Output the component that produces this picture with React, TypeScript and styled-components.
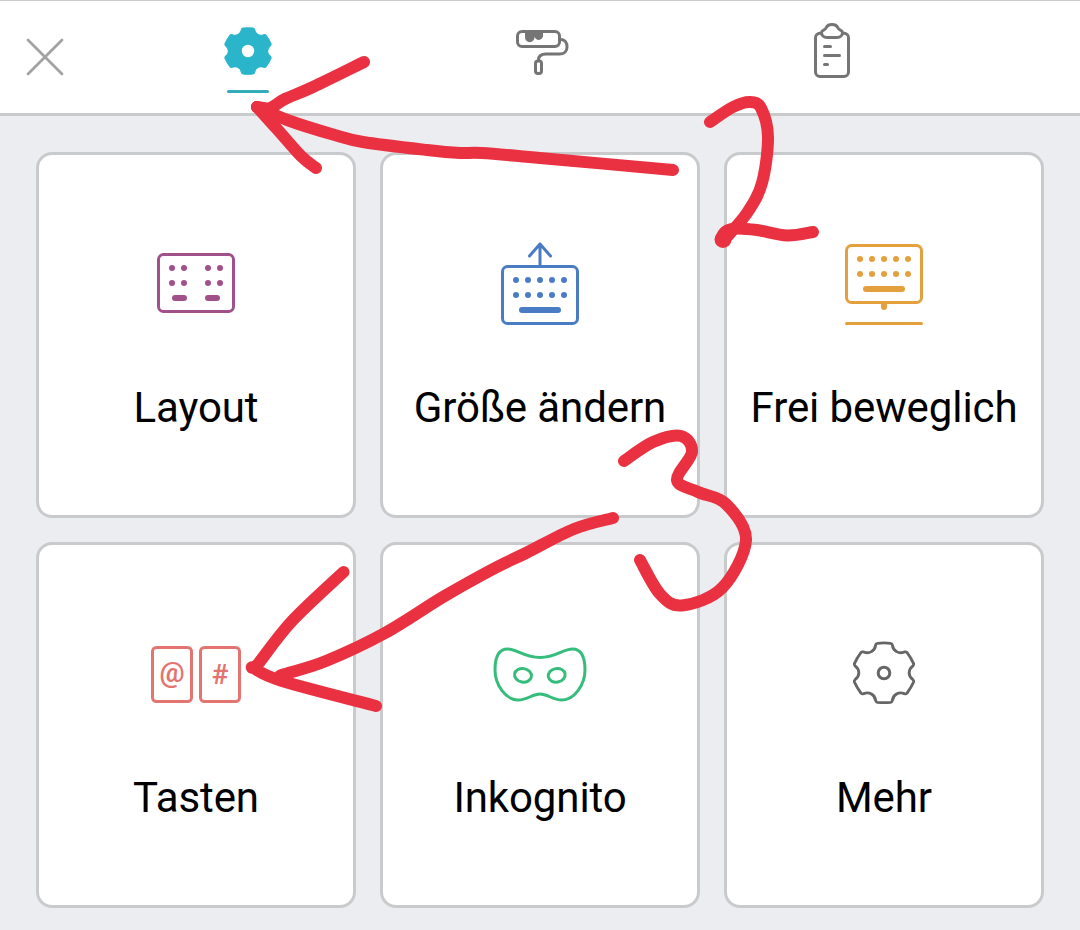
import React from "react"
import styled, { createGlobalStyle, css } from "styled-components"

const colors = {
  accent: "#2bb5cb",
  close: "#a3a3a3",
  tab: "#757575",
  border: "#c9cacc",
  background: "#ecedf1",
  marker: "#ea3141",
}

const GlobalStyle = createGlobalStyle`
  * {
    box-sizing: border-box;
  }
  body {
    margin: 0;
    overflow: hidden;
    background: ${colors.background};
    font-family: Roboto, "Liberation Sans", sans-serif;
  }
`

const Screen = styled.div`
  position: relative;
  width: 1080px;
  height: 930px;
  overflow: hidden;
  background: ${colors.background};
`

const Toolbar = styled.header`
  display: flex;
  height: 116px;
  background: #fff;
  border-top: 1px solid ${colors.border};
  border-bottom: 3px solid ${colors.border};
`

const plainButton = css`
  padding: 0;
  border: 0;
  background: none;
  font: inherit;
`

const CloseButton = styled.button`
  ${plainButton}
  display: flex;
  align-items: center;
  justify-content: center;
  width: 90px;
  margin-right: 12px;
`

const Tabs = styled.nav`
  display: grid;
  grid-template-columns: repeat(3, 292px);
`

const Tab = styled.button<{ $active?: boolean }>`
  ${plainButton}
  display: flex;
  flex-direction: column;
  align-items: center;
  color: ${(p) => (p.$active ? colors.accent : colors.tab)};

  &::after {
    content: "";
    width: 42px;
    height: 3px;
    border-radius: 2px;
    background: ${(p) => (p.$active ? "#35adb8" : "transparent")};
  }
`

const Grid = styled.main`
  display: grid;
  grid-template-columns: repeat(3, 320px);
  grid-auto-rows: 366px;
  gap: 24px;
  padding: 36px;
`

const Card = styled.button<{ $color: string }>`
  ${plainButton}
  display: flex;
  flex-direction: column;
  align-items: center;
  padding-top: 75px;
  border: 3px solid ${colors.border};
  border-radius: 16px;
  background: #fff;
  color: ${(p) => p.$color};
`

const Label = styled.span`
  margin-top: 44px;
  color: #000;
  font-size: 42px;
  line-height: 48px;
  letter-spacing: -0.1px;
  white-space: nowrap;
`

const Svg = styled.svg`
  display: block;
  flex: none;
  fill: none;
  stroke: currentColor;
  stroke-width: 3;
  stroke-linecap: round;
  stroke-linejoin: round;
`

const KeyText = styled.text`
  fill: currentColor;
  stroke: none;
  font-family: Roboto, sans-serif;
  font-size: 28px;
  font-weight: 600;
  text-anchor: middle;
`

const Annotation = styled.svg`
  position: absolute;
  inset: 0;
  fill: none;
  stroke: ${colors.marker};
  stroke-width: 12;
  stroke-linecap: round;
  stroke-linejoin: round;
  pointer-events: none;
`

type Point = [number, number]

const rotate = ([x, y]: Point, deg: number) => {
  const a = (deg * Math.PI) / 180
  const rx = x * Math.cos(a) - y * Math.sin(a)
  const ry = x * Math.sin(a) + y * Math.cos(a)
  return `${rx.toFixed(2)} ${ry.toFixed(2)}`
}

// six teeth, each followed by the valley that leads to the next one
const gearPath = () => {
  let d = `M${rotate([-8.2, -27.5], 0)}`
  for (let i = 0; i < 6; i++) {
    const r = (x: number, y: number) => rotate([x, y], i * 60)
    d += `Q${r(-7.8, -29.2)} ${r(-6.4, -29.5)}`
    d += `Q${r(0, -30.2)} ${r(6.4, -29.5)}`
    d += `Q${r(7.8, -29.2)} ${r(8.2, -27.5)}`
    d += `C${r(8.8, -21.8)} ${r(14.5, -18.5)} ${rotate([-8.2, -27.5], i * 60 + 60)}`
  }
  return d + "Z"
}

// smooth curve through all points
const smooth = (pts: Point[]) => {
  let d = `M${pts[0]}`
  for (let i = 0; i < pts.length - 1; i++) {
    const a = pts[i - 1] || pts[i]
    const b = pts[i]
    const c = pts[i + 1]
    const e = pts[i + 2] || c
    d += `C${b[0] + (c[0] - a[0]) / 6} ${b[1] + (c[1] - a[1]) / 6}`
    d += ` ${c[0] - (e[0] - b[0]) / 6} ${c[1] - (e[1] - b[1]) / 6} ${c}`
  }
  return d
}

interface DotsProps {
  xs: number[]
  ys: number[]
}

const Dots = ({ xs, ys }: DotsProps) => (
  <g fill="currentColor" stroke="none">
    {ys.map((y) => xs.map((x) => <circle key={`${x}-${y}`} cx={x} cy={y} r="3" />))}
  </g>
)

const TabIcon = ({ x = 0, children }: { x?: number; children: React.ReactNode }) => (
  <Svg width="120" height="89" viewBox={`${x} 1 120 89`}>
    {children}
  </Svg>
)

const CardIcon = ({ x = 0, children }: { x?: number; children: React.ReactNode }) => (
  <Svg width="120" height="110" viewBox={`${x} 0 120 110`}>
    {children}
  </Svg>
)

const LayoutIcon = () => (
  <CardIcon x={6}>
    <rect x="28.5" y="24.5" width="75" height="57" rx="5" />
    <Dots xs={[42, 54, 78, 90]} ys={[38, 53]} />
    <path d="M45 68h9M78 68h9" strokeWidth="6" />
  </CardIcon>
)

const ResizeIcon = () => (
  <CardIcon>
    <path d="M60 35V14M49.5 26 60 14 70.5 26" />
    <rect x="22.5" y="36.5" width="75" height="57" rx="5" />
    <Dots xs={[36, 48, 60, 72, 84]} ys={[50, 65]} />
    <path d="M42 80h36" strokeWidth="6" />
  </CardIcon>
)

const FloatIcon = () => (
  <CardIcon>
    <rect x="22.5" y="15.5" width="75" height="57" rx="5" />
    <Dots xs={[36, 48, 60, 72, 84]} ys={[29, 44]} />
    <path d="M42 59h36M60 75v2" strokeWidth="6" />
    <path d="M22.5 93.5h75" />
  </CardIcon>
)

const KeysIcon = () => (
  <CardIcon x={6}>
    <rect x="22.5" y="27.5" width="39" height="54" rx="4" />
    <rect x="70.5" y="27.5" width="39" height="54" rx="4" />
    <KeyText x="42" y="62">@</KeyText>
    <KeyText x="90" y="64">#</KeyText>
  </CardIcon>
)

const MaskIcon = () => (
  <CardIcon>
    <path d="M60 37.5C44 37.5 37 29 27.5 29C18 29 15 39 15 50C15 65 26 80 38 80C48 80 52 74 60 74C68 74 72 80 82 80C94 80 105 65 105 50C105 39 102 29 92.5 29C83 29 76 37.5 60 37.5Z" />
    <ellipse cx="43" cy="55.3" rx="8.5" ry="6.8" transform="rotate(10 43 55.3)" />
    <ellipse cx="76.7" cy="55.3" rx="8.5" ry="6.8" transform="rotate(-10 76.7 55.3)" />
  </CardIcon>
)

const MoreIcon = () => (
  <CardIcon>
    <path
      d={gearPath()}
      transform="translate(60 52.8) scale(1.03 1)"
      strokeWidth="2.8"
    />
    <circle cx="60" cy="53" r="5.8" />
  </CardIcon>
)

const cards = [
  { label: "Layout", color: "#a2508a", icon: <LayoutIcon /> },
  { label: "Größe ändern", color: "#4a7cc6", icon: <ResizeIcon /> },
  { label: "Frei beweglich", color: "#e5a03e", icon: <FloatIcon /> },
  { label: "Tasten", color: "#e37470", icon: <KeysIcon /> },
  { label: "Inkognito", color: "#36bd7c", icon: <MaskIcon /> },
  { label: "Mehr", color: "#666", icon: <MoreIcon /> },
]

const strokes: Point[][] = [
  // arrow to the settings tab
  [[673, 170], [540, 158], [482, 153], [460, 153], [427, 150], [363, 142], [333, 134.5], [290, 121], [257, 107]],
  [[364, 62], [313, 87], [285, 99], [270, 108], [257, 107]],
  [[257, 107], [277, 129], [301, 156], [316, 168]],
  // 2
  [[710, 122], [733, 107], [750, 102], [761, 108], [768, 137], [762, 183], [747, 213], [724, 240]],
  [[721, 239], [725, 232], [735, 228.5], [757, 230], [787, 235.5], [813, 232]],
  // arrow to the keys card
  [[613, 518], [574, 529], [526, 553], [495, 568], [443, 597], [385, 633], [326, 661], [285, 674], [280, 676]],
  [[343.5, 572], [292, 621], [258, 664], [254, 668], [282, 681], [376, 706]],
  // 3
  [[624, 461], [653, 442], [681, 436], [692, 452], [677, 480], [698, 492], [726, 504], [746, 540], [722, 588], [682, 605.5], [660, 594], [640, 560]],
]

const App = () => (
  <Screen>
    <GlobalStyle />
    <Toolbar>
      <CloseButton aria-label="Schließen">
        <Svg width="40" height="40" viewBox="0 0 40 40" color={colors.close}>
          <path d="m3 3 34 34M37 3l-34 34" strokeWidth="2.8" />
        </Svg>
      </CloseButton>
      <Tabs>
        <Tab $active>
          <TabIcon>
            <g transform="translate(60 51)">
              <path
                d={gearPath()}
                transform="scale(0.8 0.78)"
                fill="currentColor"
                strokeWidth="1.5"
              />
              <circle r="6.2" fill="#fff" stroke="none" />
            </g>
          </TabIcon>
        </Tab>
        <Tab>
          <TabIcon x={-10}>
            <rect x="27.5" y="31.5" width="42" height="15" rx="4.5" />
            <path
              d="M35 32h18v2.5a4.3 4.3 0 0 1-8.5 2v1a4.3 4.3 0 0 1-9.5 0Z"
              fill="currentColor"
              stroke="none"
            />
            <path d="M71 39.5c4 0 6 3.5 6 7.5s-2.5 7-7 7H56c-5 0-7.5 2-7.5 6" />
            <rect x="45.5" y="61" width="6" height="12.5" rx="2.5" />
          </TabIcon>
        </Tab>
        <Tab>
          <TabIcon x={-8}>
            <rect x="35.5" y="33.2" width="33" height="43.3" rx="4.5" />
            <path
              d="M47 37.5C43.5 37.5 41.5 35 41.5 32.5C41.5 30 45 30.5 46 28C47 25.5 49 24.5 52 24.5C55 24.5 57 25.5 58 28C59 30.5 62.5 30 62.5 32.5C62.5 35 60.5 37.5 57 37.5Z"
              fill="#fff"
            />
            <path d="M44.5 46.5h6M44.5 55.5h15M44.5 64.5h3" />
          </TabIcon>
        </Tab>
      </Tabs>
    </Toolbar>
    <Grid>
      {cards.map(({ label, color, icon }) => (
        <Card key={label} $color={color}>
          {icon}
          <Label>{label}</Label>
        </Card>
      ))}
    </Grid>
    <Annotation width="1080" height="930" viewBox="0 0 1080 930">
      {strokes.map((pts, i) => (
        <path key={i} d={smooth(pts)} />
      ))}
      <circle cx="723" cy="239.5" r="2.5" />
    </Annotation>
  </Screen>
)

export default App
